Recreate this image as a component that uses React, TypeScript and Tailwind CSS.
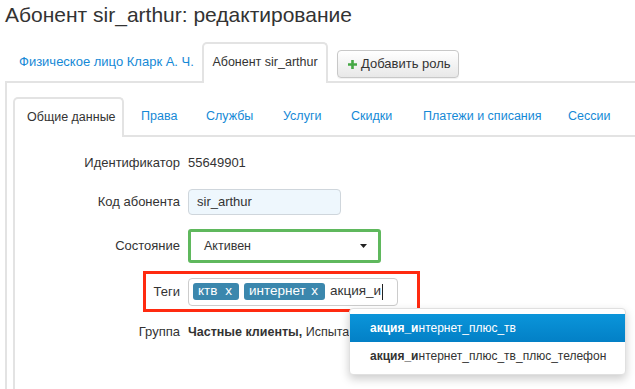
import React from "react";

export default function App() {
  const innerTabs = [
    { label: "Права", w: "w-[65px]" },
    { label: "Службы", w: "w-[77px]" },
    { label: "Услуги", w: "w-[68px]" },
    { label: "Скидки", w: "w-[72px]" },
    { label: "Платежи и списания", w: "w-[145px]" },
    { label: "Сессии", w: "w-[80px]" },
  ];
  return (
    <div className="relative w-[635px] h-[389px] overflow-hidden bg-white text-[#333] font-['Liberation_Sans',Arial,sans-serif] text-[13px]">
      <h1 className="h-[42px] pl-[5px] pt-[2px] text-[21px] leading-[26px] text-[#333]">
        Абонент sir_arthur: редактирование
      </h1>

      {/* outer tabs */}
      <div className="ml-[5px] flex h-[41px] items-end border-b-2 border-[#e3e3e3]">
        <div className="flex h-[39px] w-[195px] items-center whitespace-nowrap pl-[14px] text-[13px] text-[#1589d6]">
          Физическое лицо Кларк А. Ч.
        </div>
        <div className="-mb-[2px] ml-[2px] flex h-[41px] w-[126px] items-center justify-center rounded-t-[5px] border-2 border-b-0 border-[#e3e3e3] bg-white pb-[2px] text-[12.5px]">
          Абонент sir_arthur
        </div>
        <div className="mb-[3px] ml-[9px] flex h-[28px] w-[122px] items-center rounded-[4px] border border-[#c8c8c8] bg-gradient-to-b from-white to-[#e8e8e8] pl-[9px] text-[13px] shadow-[0_1px_1px_rgba(0,0,0,0.06)]">
          <svg width="11" height="11" viewBox="0 0 11 11" className="mr-[3px]">
            <path d="M5.5 1v9M1 5.5h9" stroke="#45a845" strokeWidth="2.6" />
          </svg>
          Добавить роль
        </div>
      </div>

      {/* outer panel */}
      <div className="ml-[5px] h-[320px] border-l-2 border-[#e3e3e3] pl-[6px] pt-[14px]">
        {/* inner tabs */}
        <div className="flex h-[40px] items-end border-b-2 border-[#e3e3e3]">
          <div className="-mb-[2px] flex h-[40px] w-[111px] items-center rounded-t-[5px] border-2 border-b-0 border-[#e3e3e3] bg-white pb-[1px] pl-[12px] text-[12.5px]">
            Общие данные
          </div>
          {innerTabs.map((t) => (
            <div
              key={t.label}
              className={`flex h-[38px] items-center whitespace-nowrap pl-[17px] text-[12.5px] text-[#1589d6] ${t.w} shrink-0`}
            >
              {t.label}
            </div>
          ))}
        </div>

        {/* inner panel */}
        <div className="h-[260px] border-l-2 border-[#e3e3e3] pt-[16px]">
          <div className="flex h-[20px] items-center">
            <div className="w-[165px] text-right">Идентификатор</div>
            <div className="ml-[8px]">55649901</div>
          </div>

          <div className="mt-[16px] flex h-[26px] items-center">
            <div className="w-[165px] text-right">Код абонента</div>
            <div className="ml-[8px] flex h-[26px] w-[153px] items-center rounded-[4px] border border-[#cfd6dc] bg-[#eef7fd] pl-[8px]">
              sir_arthur
            </div>
          </div>

          <div className="mt-[14px] flex h-[34px] items-center">
            <div className="w-[165px] text-right">Состояние</div>
            <div className="ml-[8px] h-[34px] w-[193px] rounded-[3px] border-[3px] border-[#5fb85d] p-[1px]">
              <div className="flex h-full items-center justify-between rounded-[3px] bg-white pl-[12px] pr-[10px] text-[12.5px]">
                <span>Активен</span>
                <svg width="7" height="4" viewBox="0 0 7 4">
                  <path d="M0 0h7L3.5 4z" fill="#222" />
                </svg>
              </div>
            </div>
          </div>

          <div className="ml-[128px] mt-[8px] flex h-[41px] w-[277px] items-center border-[3px] border-[#ff2a10]">
            <div className="w-[34px] text-right">Теги</div>
            <div className="ml-[8px] flex h-[28px] w-[210px] items-center rounded-[4px] border border-[#ccc] pl-[4px] text-[13.5px]">
              <span className="flex h-[17px] w-[46px] items-center justify-between rounded-[3px] bg-[#3b87ad] pl-[5px] pr-[7px] text-white">
                <span>ктв</span>
                <span>x</span>
              </span>
              <span className="ml-[5px] flex h-[17px] w-[81px] items-center justify-between rounded-[3px] bg-[#3b87ad] pl-[5px] pr-[7px] text-white">
                <span>интернет</span>
                <span>x</span>
              </span>
              <span className="ml-[5px]">акция_и</span>
              <span className="ml-[1px] h-[16px] w-px bg-[#222]" />
            </div>
          </div>

          <div className="mt-[10px] flex h-[20px] items-center">
            <div className="w-[165px] text-right">Группа</div>
            <div className="ml-[8px] whitespace-nowrap text-[12.5px]">
              <b>Частные клиенты,</b> Испытатели
            </div>
          </div>
        </div>
      </div>

      {/* autocomplete dropdown */}
      <div className="absolute left-[349px] top-[308px] w-[277px] rounded-[4px] border border-[#e0e0e0] bg-white py-[5px] text-[12px] shadow-[0_4px_10px_rgba(0,0,0,0.2)]">
        <div className="flex h-[28px] items-center whitespace-nowrap bg-gradient-to-b from-[#0b95da] to-[#0380c6] pl-[20px] text-white">
          <b>акция_и</b>нтернет_плюс_тв
        </div>
        <div className="flex h-[27px] items-center whitespace-nowrap pl-[20px] text-[#333]">
          <b>акция_и</b>нтернет_плюс_тв_плюс_телефон
        </div>
      </div>
    </div>
  );
}
